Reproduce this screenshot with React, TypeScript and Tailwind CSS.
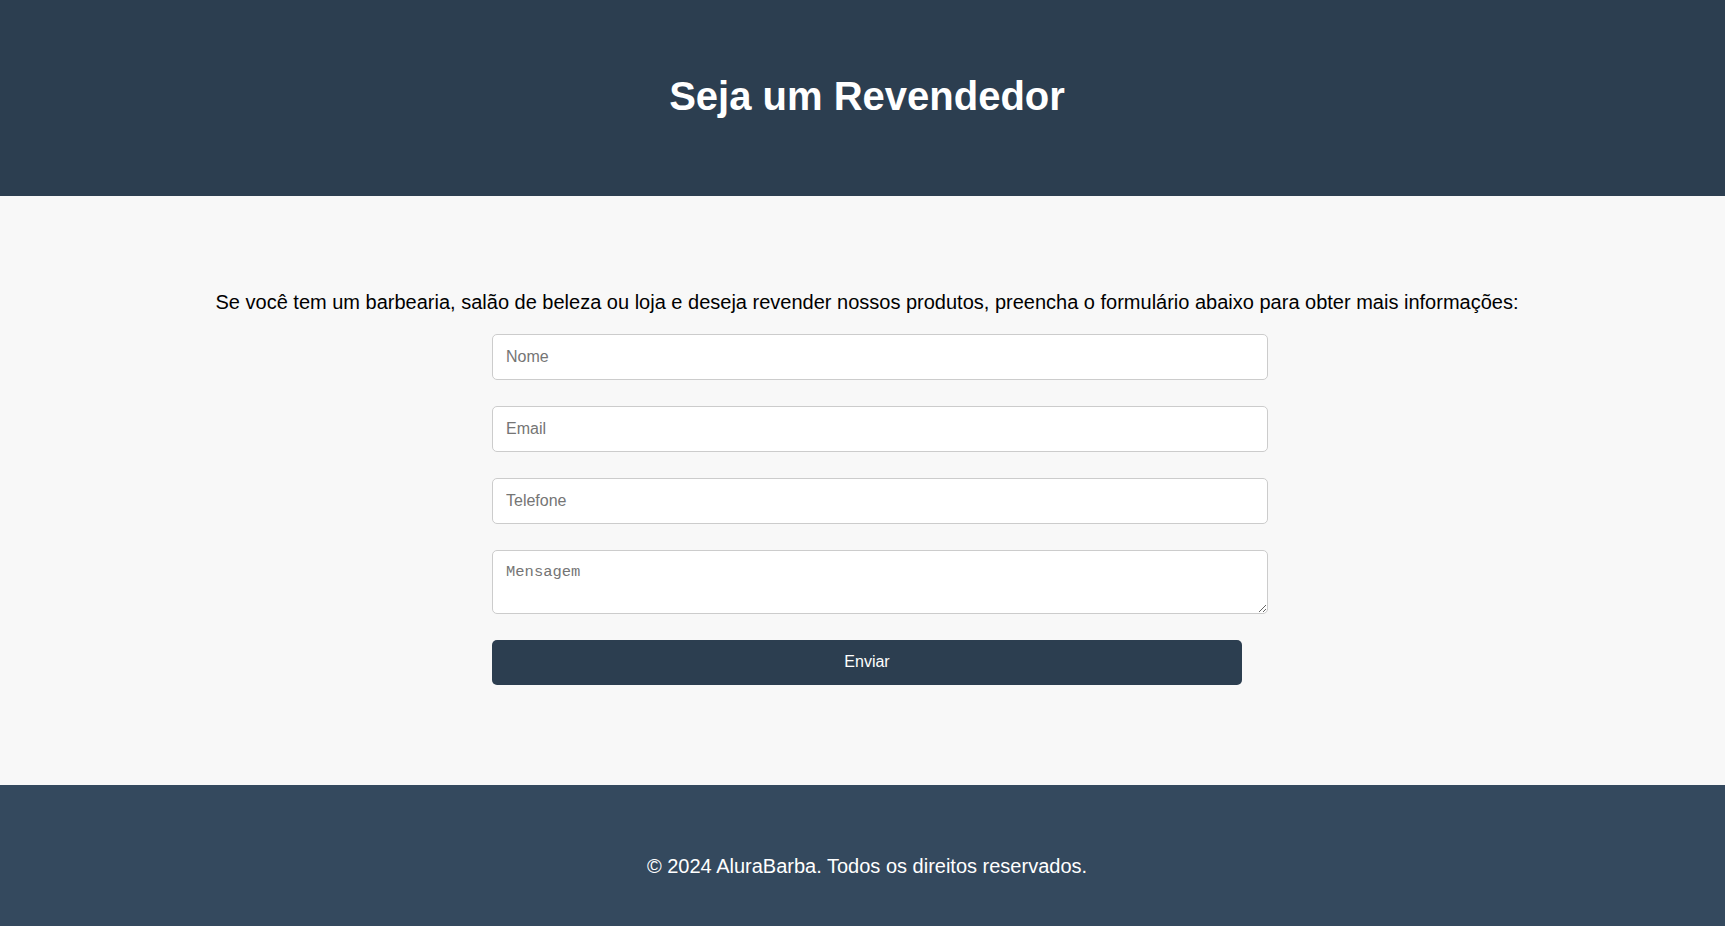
export default function App() {
  return (
    <div className="min-h-screen flex flex-col bg-[#f8f8f8] font-['Liberation_Sans',Arial,sans-serif]">
      <header className="bg-[#2c3e50] pl-[9px] pt-[73px] pb-[77px] text-center">
        <h1 className="text-[40px] leading-[46px] font-bold text-white">Seja um Revendedor</h1>
      </header>

      <main className="pl-[9px] pt-[95px] pb-[100px] text-center">
        <p className="text-[20px] leading-[23px] text-black">
          Se você tem um barbearia, salão de beleza ou loja e deseja revender nossos produtos, preencha o formulário
          abaixo para obter mais informações:
        </p>
        <form className="w-[750px] mx-auto mt-[20px] text-left" onSubmit={(e) => e.preventDefault()}>
          <input
            type="text"
            placeholder="Nome"
            className="block w-[776px] h-[46px] mb-[26px] pl-[13px] pr-3 bg-white border border-[#cccccc] rounded-[5px] text-[16px] placeholder:text-[#757575] outline-none"
          />
          <input
            type="email"
            placeholder="Email"
            className="block w-[776px] h-[46px] mb-[26px] pl-[13px] pr-3 bg-white border border-[#cccccc] rounded-[5px] text-[16px] placeholder:text-[#757575] outline-none"
          />
          <input
            type="tel"
            placeholder="Telefone"
            className="block w-[776px] h-[46px] mb-[26px] pl-[13px] pr-3 bg-white border border-[#cccccc] rounded-[5px] text-[16px] placeholder:text-[#757575] outline-none"
          />
          <textarea
            placeholder="Mensagem"
            className="block w-[776px] h-[64px] mb-[26px] pl-[13px] pr-3 py-3 bg-white border border-[#cccccc] rounded-[5px] font-['Liberation_Mono',monospace] text-[15.5px] leading-[19px] placeholder:text-[#757575] outline-none"
          />
          <button
            type="submit"
            className="block w-full h-[45px] pb-[2px] bg-[#2c3e50] text-white text-[16px] rounded-[5px]"
          >
            Enviar
          </button>
        </form>
      </main>

      <footer className="flex-1 bg-[#34495e] pl-[9px] pt-[70px] pb-[70px] text-center">
        <p className="text-[20px] leading-[23px] text-white">© 2024 AluraBarba. Todos os direitos reservados.</p>
      </footer>
    </div>
  )
}
